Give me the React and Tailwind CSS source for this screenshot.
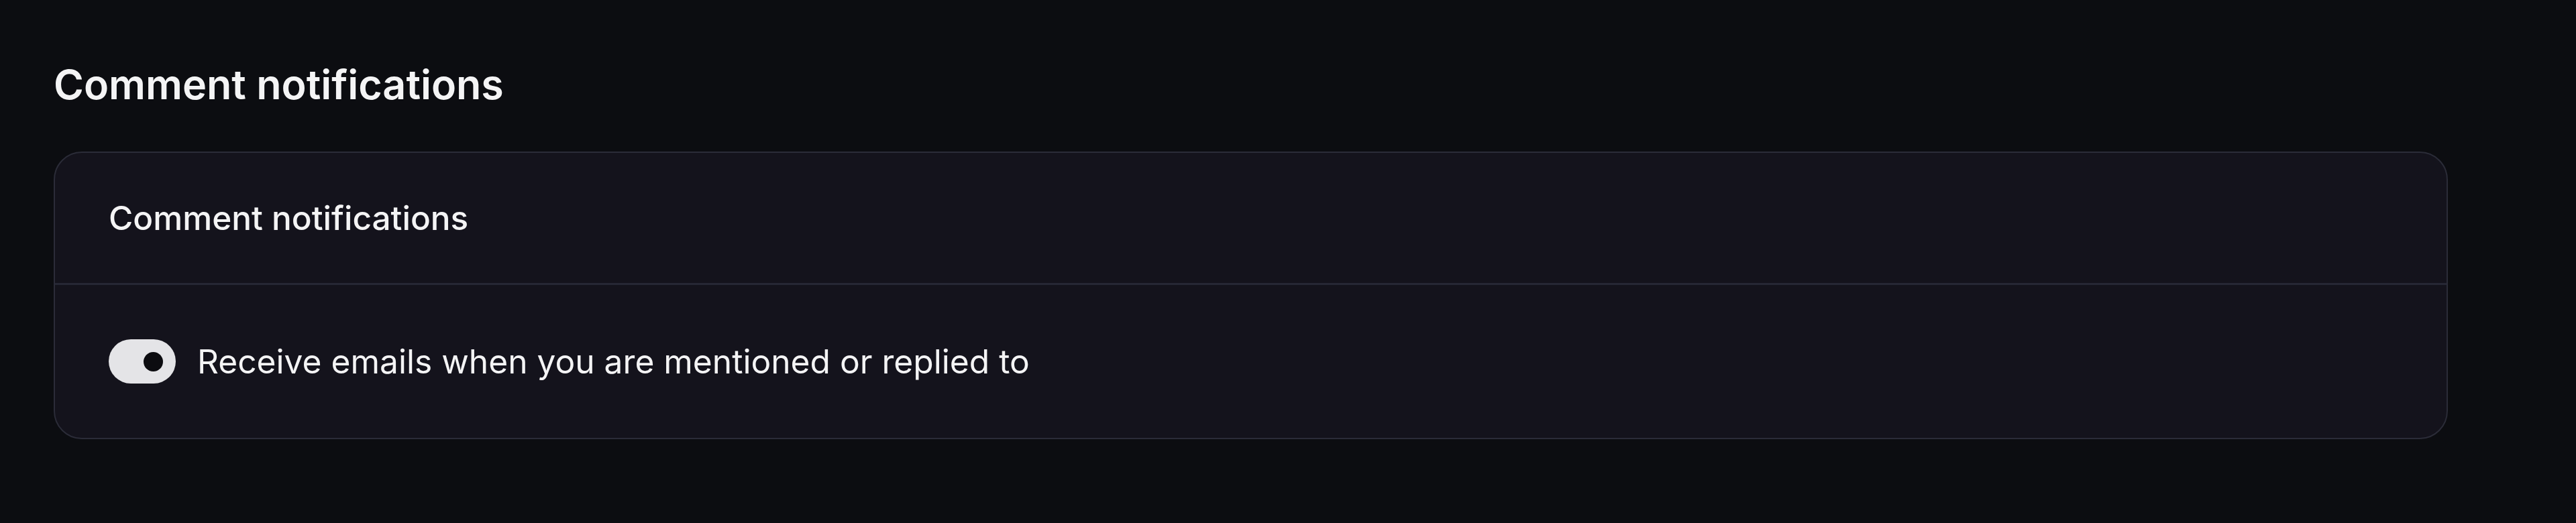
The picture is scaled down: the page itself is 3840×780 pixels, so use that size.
export default function App() {
    const enabled = true;

    return (
        <div className="min-h-[780px] w-full bg-[#0c0d11] px-[80px] pt-[86px] text-[#f4f4f5]" style={{ fontFamily: "Inter, 'Noto Sans', sans-serif" }}>
            <h2 className="text-[61px] font-semibold leading-[80px]">Comment notifications</h2>

            {/* Card */}
            <div className="mt-[60px] w-[3569px] overflow-hidden rounded-[42px] border-2 border-[#2b2c38] bg-[#14131c]">
                <div className="border-b-[3px] border-[#262734] px-[80px] py-[62px]">
                    <h3 className="text-[49.5px] font-medium leading-[70px]">Comment notifications</h3>
                </div>
                <div className="flex items-center gap-[32px] px-[80px] py-[79px]">
                    <button className="flex h-[66px] w-[100px] shrink-0 items-center justify-end rounded-full bg-[#e4e4e7] pr-[19px]">
                        {enabled && <span className="block h-[29px] w-[29px] rounded-full bg-[#0c0c10]" />}
                    </button>
                    <p className="text-[49.7px] leading-[70px]">Receive emails when you are mentioned or replied to</p>
                </div>
            </div>
        </div>
    );
}
